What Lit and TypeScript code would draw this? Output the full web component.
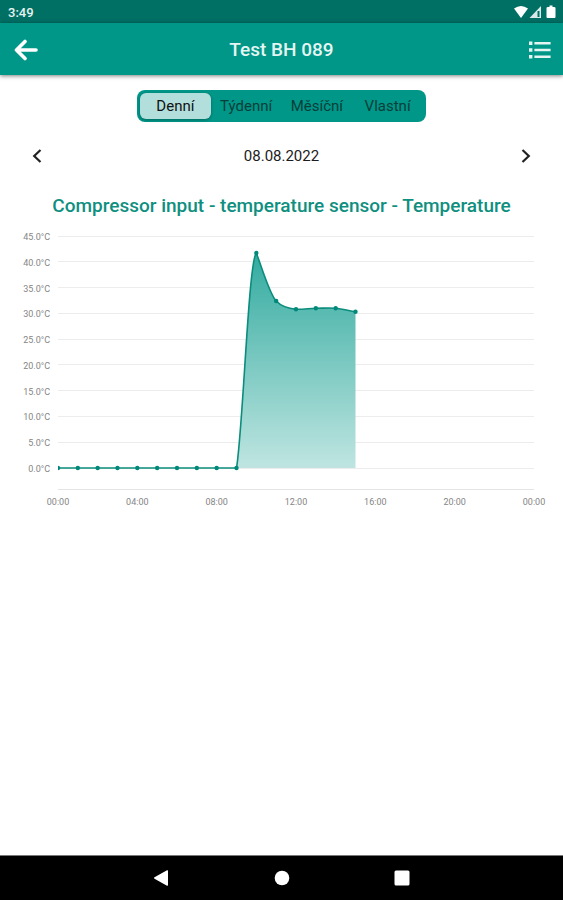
import { LitElement, html, svg, css } from "lit";
import { customElement, property, state } from "lit/decorators.js";

interface Sample {
  hour: number;
  value: number;
  // Bezier handles of the stretch that leads to this sample, as [hour, value]
  handles?: [[number, number], [number, number]];
}

const SAMPLES: Sample[] = [
  ...[0, 1, 2, 3, 4, 5, 6, 7, 8, 9].map((hour) => ({ hour, value: 0 })),
  { hour: 10, value: 41.7, handles: [[9.33, 7.5], [9.6, 40]] },
  { hour: 11, value: 32.4, handles: [[10.2, 39.8], [10.67, 33.6]] },
  { hour: 12, value: 30.8, handles: [[11.25, 31.4], [11.67, 30.9]] },
  { hour: 13, value: 31, handles: [[12.33, 30.7], [12.67, 31]] },
  { hour: 14, value: 31, handles: [[13.33, 31], [13.67, 31.1]] },
  { hour: 15, value: 30.3, handles: [[14.33, 30.9], [14.67, 30.5]] },
];

const PLOT = { left: 58, right: 534, top: 11, bottom: 243, axis: 264 };
const px = (hour: number) => PLOT.left + (hour / 24) * (PLOT.right - PLOT.left);
const py = (value: number) => PLOT.bottom - (value / 45) * (PLOT.bottom - PLOT.top);
const at = (hour: number, value: number) => `${px(hour).toFixed(1)},${py(value).toFixed(1)}`;

@customElement("temperature-chart")
export class TemperatureChart extends LitElement {
  static styles = css`
    :host { display: block; }
    svg { display: block; width: 100%; height: auto; }
    .grid { stroke: #ececec; stroke-width: 1; shape-rendering: crispEdges; }
    .axis { stroke: #e4e4e4; }
    .tick { fill: #858585; font: 9px Roboto, sans-serif; }
    .end { text-anchor: end; }
    .middle { text-anchor: middle; }
    .line { fill: none; stroke: #0b8c7c; stroke-width: 1.6; }
    .dot { fill: #00897b; }
  `;

  @property({ attribute: false }) samples: Sample[] = SAMPLES;

  render() {
    const [first, ...rest] = this.samples;
    const last = this.samples[this.samples.length - 1];
    const line =
      `M${at(first.hour, first.value)}` +
      rest
        .map((s) =>
          s.handles
            ? `C${at(...s.handles[0])} ${at(...s.handles[1])} ${at(s.hour, s.value)}`
            : `L${at(s.hour, s.value)}`
        )
        .join("");
    const degrees = [45, 40, 35, 30, 25, 20, 15, 10, 5, 0];
    const hours = [0, 4, 8, 12, 16, 20, 24];
    return html`
      <svg viewBox="0 0 563 290" role="img" aria-label="Temperature by hour">
        <defs>
          <linearGradient id="fade" x1="0" y1="0" x2="0" y2="1">
            <stop offset="0" stop-color="#33aba0" />
            <stop offset="1" stop-color="#bfe5e1" />
          </linearGradient>
          <clipPath id="plot">
            <rect x=${PLOT.left} y="0" width=${PLOT.right - PLOT.left} height="290" />
          </clipPath>
        </defs>
        ${degrees.map(
          (d) => svg`
            <line class="grid" x1=${PLOT.left} x2=${PLOT.right} y1=${py(d)} y2=${py(d)} />
            <text class="tick end" x="50" y=${py(d) + 4}>${d.toFixed(1)}°C</text>`
        )}
        <line class="grid axis" x1=${PLOT.left} x2=${PLOT.right} y1=${PLOT.axis} y2=${PLOT.axis} />
        ${hours.map(
          (h) => svg`
            <text class="tick middle" x=${px(h)} y="280">${String(h % 24).padStart(2, "0")}:00</text>`
        )}
        <path d="${line}L${at(last.hour, 0)}Z" fill="url(#fade)" />
        <g clip-path="url(#plot)">
          <path class="line" d=${line} />
          ${this.samples.map(
            (s) => svg`<circle class="dot" cx=${px(s.hour)} cy=${py(s.value)} r="2.2" />`
          )}
        </g>
      </svg>
    `;
  }
}

@customElement("app-root")
export class AppRoot extends LitElement {
  static styles = css`
    :host {
      display: flex;
      flex-direction: column;
      min-height: 100vh;
      background: #fff;
      color: #1c1c1c;
      font-family: Roboto, sans-serif;
    }
    button {
      display: flex;
      align-items: center;
      justify-content: center;
      margin: 0;
      padding: 0;
      border: 0;
      background: none;
      color: inherit;
      font: inherit;
      cursor: pointer;
    }
    svg { display: block; }
    .status {
      display: flex;
      align-items: center;
      justify-content: space-between;
      box-sizing: border-box;
      height: 23px;
      padding: 1px 7px 0 8px;
      background: #006f64;
      color: #e6f3f1;
      font-size: 13px;
      font-weight: 500;
    }
    .bar {
      display: grid;
      grid-template-columns: 52px 1fr 52px;
      align-items: center;
      box-sizing: border-box;
      height: 52px;
      padding-top: 1px;
      background: #009688;
      color: #fff;
      box-shadow: 0 1px 4px rgba(0, 0, 0, 0.5);
    }
    .bar button { height: 51px; }
    .bar h1 {
      margin: 0;
      color: #e4f5f2;
      text-align: center;
      font-size: 19px;
      line-height: 25px;
      font-weight: 500;
    }
    .bar .menu { justify-content: flex-end; padding-right: 12px; }
    main { flex: 1; }
    .segments {
      display: grid;
      grid-template-columns: repeat(4, 1fr);
      box-sizing: border-box;
      width: 289px;
      height: 32px;
      margin: 15px auto 0;
      padding: 3px;
      border-radius: 8px;
      background: #009688;
      font-size: 15px;
    }
    .segments button { border-radius: 6px; color: #073f39; }
    .segments .on {
      background: #b2dfdb;
      color: #111;
      box-shadow: 0 1px 3px rgba(0, 0, 0, 0.3);
    }
    .dates {
      display: flex;
      align-items: center;
      justify-content: space-between;
      margin-top: 18px;
      padding: 0 24px;
      font-size: 15px;
      line-height: 32px;
    }
    .dates button { width: 26px; height: 32px; }
    h2 {
      margin: 22px 0 7px;
      color: #0f8f7f;
      text-align: center;
      font-size: 19px;
      line-height: 24px;
      font-weight: 500;
    }
    .nav {
      display: grid;
      grid-template-columns: repeat(3, 120px);
      justify-content: center;
      height: 44px;
      border-top: 1px solid #777;
      background: #000;
    }
  `;

  @state() private range = "Denní";

  render() {
    return html`
      <div class="status">
        <span>3:49</span>
        <svg width="42" height="14" viewBox="0 0 42 14" fill="#fff" aria-hidden="true">
          <path d="M0 3.6Q7-1.8 14 3.6L7 13Z" />
          <path d="M27 1V13H15.500Z" fill-opacity="0.85" />
          <path d="M23.500 6H25.500V12H23.500Z" fill="#006f64" />
          <path d="M35.500 0.500h3v1.400H40q1.500 0 1.500 1V12q0 1-1 1h-7q-1 0-1-1V2.900q0-1 1.500-1h1.500Z" />
        </svg>
      </div>
      <header class="bar">
        <button aria-label="Back">
          <svg width="24" height="22" viewBox="0 0 24 22" fill="none" stroke="#fff" stroke-width="3.600" stroke-linecap="round" stroke-linejoin="round">
            <path d="M2.500 11H22M11 2.500L2.500 11L11 19.500" />
          </svg>
        </button>
        <h1>Test BH 089</h1>
        <button class="menu" aria-label="List">
          <svg width="22" height="18" viewBox="0 0 22 18" fill="#e4f5f2">
            <path d="M0 0.500h3.400v3.400H0zM0 7.300h3.400v3.400H0zM0 14.100h3.400v3.400H0zM5.400 1h16.200v2.500H5.400zM5.400 7.800h16.200v2.500H5.400zM5.400 14.500h16.200v2.500H5.400z" />
          </svg>
        </button>
      </header>
      <main>
        <div class="segments" role="group" aria-label="Období">
          ${["Denní", "Týdenní", "Měsíční", "Vlastní"].map(
            (name) => html`
              <button
                class=${name === this.range ? "on" : ""}
                aria-pressed=${name === this.range ? "true" : "false"}
                @click=${() => (this.range = name)}
              >${name}</button>`
          )}
        </div>
        <div class="dates">
          <button aria-label="Previous day">
            <svg width="10" height="14" viewBox="0 0 10 14" fill="none" stroke="#222" stroke-width="2.200"><path d="M8.500 1L2.200 7L8.500 13" /></svg>
          </button>
          <time datetime="2022-08-08">08.08.2022</time>
          <button aria-label="Next day">
            <svg width="10" height="14" viewBox="0 0 10 14" fill="none" stroke="#222" stroke-width="2.200"><path d="M1.500 1L7.800 7L1.500 13" /></svg>
          </button>
        </div>
        <h2>Compressor input - temperature sensor - Temperature</h2>
        <temperature-chart></temperature-chart>
      </main>
      <nav class="nav" aria-label="System">
        <button aria-label="Back">
          <svg width="16" height="16" viewBox="0 0 16 16" fill="#fff"><path d="M0.500 7.300L13 0.300Q14 0 14 1V15Q14 16 13 15.700L0.500 8.700Q-0.500 8 0.500 7.300Z" /></svg>
        </button>
        <button aria-label="Home">
          <svg width="16" height="16" viewBox="0 0 16 16" fill="#fff"><circle cx="8" cy="8" r="7.300" /></svg>
        </button>
        <button aria-label="Recent apps">
          <svg width="16" height="16" viewBox="0 0 16 16" fill="#fff"><rect x="0.500" y="0.500" width="15" height="15" rx="1.500" /></svg>
        </button>
      </nav>
    `;
  }
}
